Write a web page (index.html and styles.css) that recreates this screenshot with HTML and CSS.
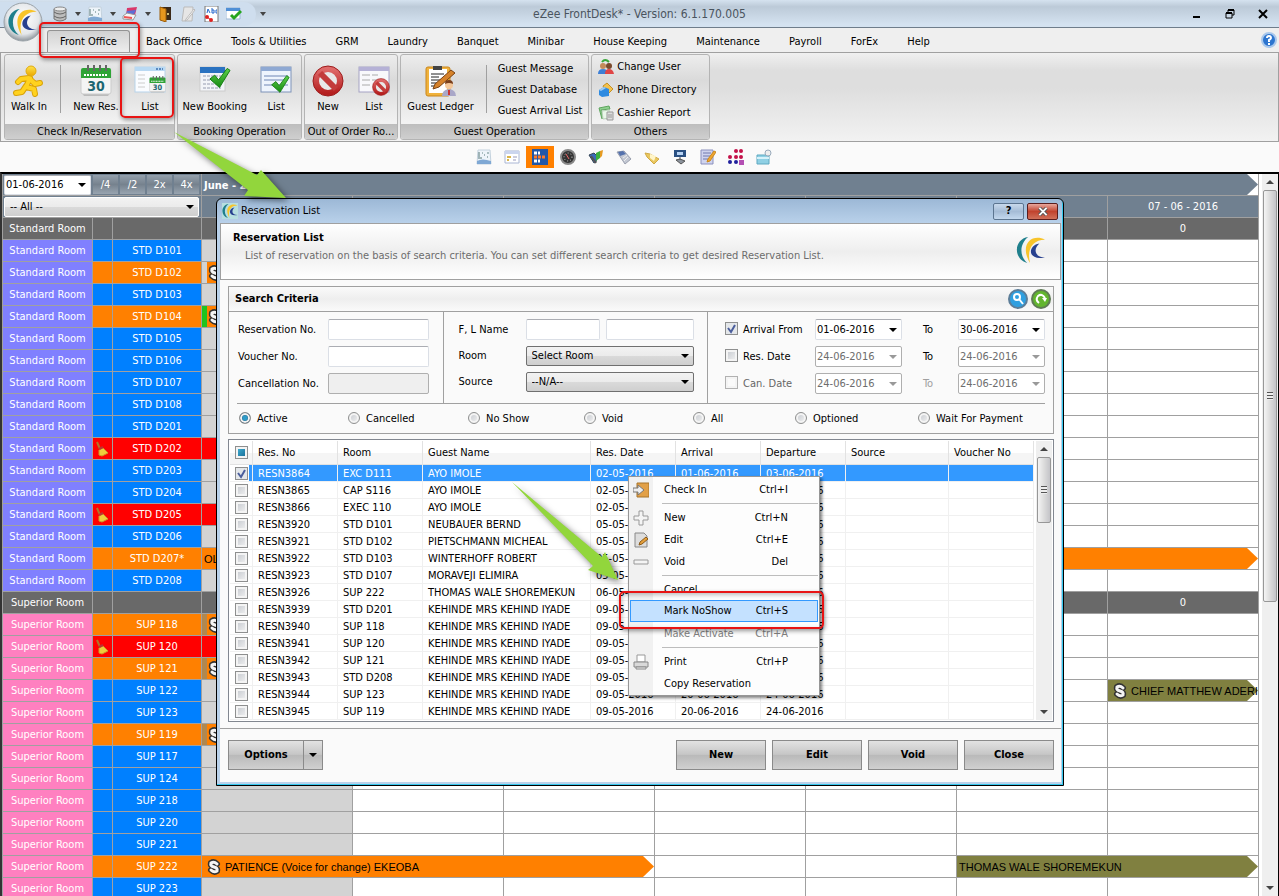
FILE: index.html
```html
<!DOCTYPE html>
<html lang="en">

<head>
    <meta charset="UTF-8" />
    <meta name="viewport" content="width=device-width, initial-scale=1.0" />
    <title>eZee FrontDesk</title>
    <link rel="stylesheet" href="styles.css">
</head>

<body>
    <svg class="sprite" aria-hidden="true">
        <defs>
            <linearGradient id="gold" x1="0" y1="0" x2="0" y2="1"><stop offset="0" stop-color="#ffe34d" /><stop offset="1" stop-color="#eba800" /></linearGradient>
            <linearGradient id="redball" x1="0" y1="0" x2="0" y2="1"><stop offset="0" stop-color="#df6a6a" /><stop offset="1" stop-color="#b51f1f" /></linearGradient>
            <linearGradient id="green" x1="0" y1="0" x2="0" y2="1"><stop offset="0" stop-color="#5fd14c" /><stop offset="1" stop-color="#158a12" /></linearGradient>
            <radialGradient id="orb" cx="50%" cy="40%" r="60%"><stop offset="0" stop-color="#fff" /><stop offset=".7" stop-color="#e4e7ea" /><stop offset="1" stop-color="#8f969c" /></radialGradient>
        </defs>
        <symbol id="swoosh" viewBox="0 0 32 30">
            <path d="M13 1C-2 3-4 24 12 29 3 21 4 8 13 1z" fill="#1f7f8c" />
            <path d="M31 4C17-3 3 9 15 29 11 14 18 4 31 4z" fill="#f8c42a" />
            <path d="M25 8C12 10 12 27 31 23 20 23 18 14 25 8z" fill="#27408f" />
        </symbol>
        <symbol id="walk" viewBox="0 0 32 32">
            <g fill="none" stroke="#d9a208" stroke-linecap="round" stroke-linejoin="round" stroke-width="6"><path d="M17 13l-4 9 8 2 1 5M13 21l-4 6-6 1M16 13l-8 1-3 3M17 14l5 5 5-1" /></g>
            <g fill="none" stroke="#ffd21f" stroke-linecap="round" stroke-linejoin="round" stroke-width="4"><path d="M17 13l-4 9 8 2 1 5M13 21l-4 6-6 1M16 13l-8 1-3 3M17 14l5 5 5-1" /></g>
            <circle cx="18" cy="6" r="5" fill="url(#gold)" stroke="#e0aa10" />
        </symbol>
        <symbol id="calendar" viewBox="0 0 32 32">
            <path d="M2 28h28l-2 3H4z" fill="#bbb" />
            <rect x="1" y="4" width="30" height="25" rx="2" fill="#f4f4f4" stroke="#ccc" />
            <path d="M1 13V5q0-2 2-2h26q2 0 2 2v8z" fill="#2fa336" />
            <path d="M8 0v6M14 0v6M20 0v6M26 0v6" stroke="#666" stroke-width="2" />
            <path d="M4 10h24" stroke="#fff" stroke-width="2" stroke-dasharray="2 1" />
            <text x="16" y="26" text-anchor="middle" class="cal-text">30</text>
        </symbol>
        <symbol id="listwin" viewBox="0 0 32 32">
            <rect x="1" y="2" width="30" height="25" fill="#fafcff" stroke="#b7d3ea" />
            <path d="M1 2h30v4H1z" fill="#b9d9f3" />
            <path d="M22 4h7" stroke="#5a89c0" stroke-width="2" stroke-dasharray="2 1" />
            <path d="M4 10h7M4 14h7M4 18h7M4 22h7" stroke="#ccc" />
        </symbol>
        <symbol id="check" viewBox="0 0 24 24">
            <path d="M2 13l5-4 4 5L20 2l3 2-11 18z" fill="url(#green)" stroke="#127a10" />
        </symbol>
        <symbol id="noentry" viewBox="0 0 32 32">
            <circle cx="16" cy="16" r="12" fill="#e8e8e8" stroke="url(#redball)" stroke-width="6" />
            <path d="M8 8l16 16" stroke="#c33b3b" stroke-width="6" />
            <circle cx="16" cy="16" r="15" fill="none" stroke="#9c1c1c" />
        </symbol>
        <symbol id="ledger" viewBox="0 0 32 32">
            <rect x="1" y="2" width="24" height="29" rx="2" fill="#f0b23c" stroke="#c9861c" />
            <rect x="4" y="4" width="18" height="24" fill="#fff" />
            <path d="M8 1h9v4H8z" fill="#444" />
            <path d="M6 9h13M6 12h8M6 15h10M6 18h6M6 21h7" stroke="#222" />
            <path d="M8 24l2-5L26 5l4 3-16 14z" fill="#d6822a" stroke="#7a4313" />
            <circle cx="24" cy="20" r="4" fill="#f4c79a" /><path d="M20 19q0-4 4-4t4 4q-4-2-8 0z" fill="#7a3f1c" />
            <path d="M17 31q0-6 7-7 7 1 7 7z" fill="#a9a7c8" /><path d="M23 25h2v5h-2z" fill="#c33" />
        </symbol>
        <symbol id="users" viewBox="0 0 16 16">
            <path d="M4 3q3-4 7 0" fill="none" stroke="#3aa63a" stroke-width="2" />
            <circle cx="5" cy="7" r="3" fill="#c48a5a" /><circle cx="11" cy="7" r="3" fill="#7a4a2c" />
            <path d="M0 15q0-5 5-5t5 5z" fill="#3d7fd6" /><path d="M7 15q0-5 4-5t5 5z" fill="#e04545" />
        </symbol>
        <symbol id="phone" viewBox="0 0 16 16">
            <path d="M5 4l4-3 6 6-6 6z" fill="#f2c14e" stroke="#c48f22" />
            <path d="M1 8l5-3 5 2v7l-7 1-3-2z" fill="#2f8be0" /><path d="M1 8l5-3 2 1-5 3z" fill="#9ccbf5" />
        </symbol>
        <symbol id="report" viewBox="0 0 16 16">
            <path d="M1 3l10-2 1 3-9 1 2 8-1 1z" fill="#8fd08f" stroke="#5ea65e" /><path d="M4 6l7-1 1 8-7 1z" fill="#eaf7ea" stroke="#b9d3b9" />
            <path d="M9 7h6v8H9z" fill="#ddd" stroke="#999" /><path d="M10 10h4M10 12h4" stroke="#999" />
        </symbol>
        <symbol id="database" viewBox="0 0 16 16">
            <path d="M2 3v10q6 4 12 0V3z" fill="#bdbdbd" stroke="#777" /><ellipse cx="8" cy="3" rx="6" ry="2" fill="#eee" stroke="#888" />
            <path d="M2 6q6 4 12 0M2 10q6 4 12 0" fill="none" stroke="#666" />
        </symbol>
        <symbol id="chart" viewBox="0 0 16 16">
            <path d="M2 1h12l1 14H1z" fill="#eef4fa" stroke="#c4d2de" /><path d="M1 12q5-3 14 0v3H1z" fill="#7fa8d4" />
            <path d="M3 3v7M4 9h2M8 6h1M11 8h1" fill="none" stroke="#577" /><path d="M6 4h1M11 4h2" stroke="#688" stroke-width="1" />
        </symbol>
        <symbol id="cards" viewBox="0 0 16 16">
            <path d="M5 2l10-1-2 8-9 1z" fill="#d9386b" /><path d="M5 5l9-1-2 4-8 1z" fill="#5b6fd6" />
            <path d="M1 10l4-3 9 2-3 5-10-1z" fill="#f5f5f5" stroke="#999" /><path d="M2 11l8 1" stroke="#e55" stroke-width="2" />
        </symbol>
        <symbol id="door" viewBox="0 0 16 16">
            <path d="M3 1h11v13H3z" fill="#3b2a1a" /><path d="M3 1l6 2v13l-6-2z" fill="#e7971e" stroke="#9c5e0b" /><circle cx="11" cy="8" r="1" fill="#fff2a0" />
        </symbol>
        <symbol id="note" viewBox="0 0 16 16">
            <path d="M4 1h9l-1 14H2z" fill="#e6e6e6" stroke="#bbb" /><path d="M14 3L6 13l-1 2 2-1 8-10z" fill="#fafafa" stroke="#bbb" />
        </symbol>
        <symbol id="abc" viewBox="0 0 16 16">
            <path d="M2 0h13v16H2z" fill="#fff" stroke="#777" /><path d="M4 7l1-4 2 4M9 2v5h2V4H9M14 4h-1v3h1" fill="none" stroke="#26c" />
            <circle cx="4" cy="11" r="2" fill="#d22" /><circle cx="8" cy="14" r="2" fill="#d22" /><path d="M4 11l4 3" stroke="#d22" />
        </symbol>
        <symbol id="booklist" viewBox="0 0 16 16">
            <path d="M0 2h14v11H0z" fill="#fff" stroke="#9bb7d6" /><path d="M0 2h14v3H0z" fill="#4f8fd6" /><path d="M5 9l3 3 7-7" fill="none" stroke="#26a51f" stroke-width="3" />
        </symbol>
        <symbol id="formwin" viewBox="0 0 16 16">
            <path d="M1 2h14v12H1z" fill="#fff" stroke="#aab6d4" /><path d="M1 2h14v3H1z" fill="#cbd5ee" /><path d="M3 8h4M3 11h2" stroke="#d9b44a" stroke-width="2" /><path d="M9 8h4M9 11h3" stroke="#99b" />
        </symbol>
        <symbol id="planner" viewBox="0 0 16 16">
            <path d="M0 0h16v16H0z" fill="#2157a8" /><path d="M2 4h6M2 12h6" stroke="#fff" stroke-width="3" stroke-dasharray="3 1" /><path d="M2 8h11" stroke="#ff7b29" stroke-width="3" stroke-dasharray="3 1" />
        </symbol>
        <symbol id="gauge" viewBox="0 0 16 16">
            <circle cx="8" cy="8" r="7" fill="#333" stroke="#888" stroke-width="2" /><circle cx="8" cy="8" r="4" fill="none" stroke="#ccc" stroke-dasharray="1 2" /><path d="M6 5l3 5" stroke="#e66" />
        </symbol>
        <symbol id="flag" viewBox="0 0 16 16">
            <path d="M1 6l5-2 3 3-1 6-2 1z" fill="#3a6ab8" stroke="#345" /><path d="M8 4l4-2v7l-4 3z" fill="#3db03d" /><path d="M12 2l3-1-1 6-2 2z" fill="#e59b22" /><path d="M3 7l5 7" stroke="#555" stroke-width="2" />
        </symbol>
        <symbol id="pages" viewBox="0 0 16 16">
            <path d="M1 3l7-1 7 8-6 5z" fill="#c3c8d3" stroke="#9aa0ae" /><path d="M2 3l5-1 3 3-6 2z" fill="#5572ad" /><path d="M7 9l4-3M8 12l4-4" stroke="#eee" />
        </symbol>
        <symbol id="folder" viewBox="0 0 16 16">
            <path d="M1 4l5 1 9 5-5 5-7-7z" fill="#e9c75f" stroke="#d0a945" /><path d="M6 5l6 2-2 5-4-3z" fill="#fff5c9" />
        </symbol>
        <symbol id="kiosk" viewBox="0 0 16 16">
            <path d="M2 1h12v7H2z" fill="#2a5082" /><path d="M5 3h6v3H5z" fill="#b8d4f5" /><path d="M8 8v3M4 11l4-1 5 2-4 3z" fill="#8b929c" stroke="#555" />
        </symbol>
        <symbol id="editdoc" viewBox="0 0 16 16">
            <path d="M1 1h12v14H1z" fill="#cfd3ee" stroke="#8b90bd" /><path d="M3 4h8M3 7h7M3 10h5" stroke="#7078ad" /><path d="M7 13l1-3 6-8 2 1-6 9z" fill="#f0a531" stroke="#c9891c" />
        </symbol>
        <symbol id="dots" viewBox="0 0 16 16">
            <g fill="#c3124a"><circle cx="8" cy="2" r="2" /><circle cx="13" cy="2" r="2" /><circle cx="2" cy="8" r="2" /><circle cx="8" cy="8" r="2" /><circle cx="13" cy="8" r="2" /></g>
            <g fill="#20209c"><circle cx="2" cy="13" r="2" /><circle cx="8" cy="13" r="2" /></g><path d="M11 11h5v5h-5z" fill="#b34fb3" />
        </symbol>
        <symbol id="lockfolder" viewBox="0 0 16 16">
            <path d="M1 6h12v9H1z" fill="#8fd0e4" stroke="#5fa9c1" /><path d="M1 9h12" stroke="#d7f2fa" stroke-width="2" /><circle cx="12" cy="4" r="3" fill="#eee" stroke="#9ab" />
        </symbol>
        <symbol id="broom" viewBox="0 0 14 16">
            <path d="M2 1l3 7" stroke="#b0752a" stroke-width="2" /><path d="M4 9l4-2 5 5-6 3-3-1z" fill="#f0cc3c" stroke="#c99a2a" /><path d="M4 8l4-2" stroke="#b33" stroke-width="2" />
        </symbol>
        <symbol id="dollar" viewBox="0 0 14 16">
            <g fill="none" stroke-linecap="round">
                <path d="M10 5Q7 2 4 4 3 7 7 8 11 9 10 12 7 14 4 11" stroke="#333" stroke-width="6" />
                <path d="M10 5Q7 2 4 4 3 7 7 8 11 9 10 12 7 14 4 11" stroke="#f4f4f4" stroke-width="3" />
            </g>
        </symbol>
    </svg>

    <div class="app">
        <header class="titlebar">
            <div class="quick-area">
                <div class="quick">
                    <button aria-label="Data"><svg><use href="#database" /></svg></button><i class="caret"></i>
                    <button aria-label="Charts"><svg><use href="#chart" /></svg></button><i class="caret"></i>
                    <button aria-label="Cards"><svg><use href="#cards" /></svg></button><i class="caret"></i>
                    <button aria-label="Exit"><svg><use href="#door" /></svg></button>
                    <button aria-label="Notes"><svg><use href="#note" /></svg></button>
                    <button aria-label="Names"><svg><use href="#abc" /></svg></button>
                    <button aria-label="Bookings"><svg><use href="#booklist" /></svg></button>
                </div>
                <i class="caret more"></i>
            </div>
            <h1>eZee FrontDesk* - Version: 6.1.170.005</h1>
            <div class="window-buttons">
                <button aria-label="Minimize"><svg viewBox="0 0 10 10"><path d="M1 8h7" stroke="#000" stroke-width="2" /></svg></button>
                <button aria-label="Restore"><svg viewBox="0 0 10 10"><path d="M3 3V1h6v5H7M1 4h6v5H1z" fill="none" stroke="#000" /><path d="M3 1h6M1 4h6" stroke="#000" stroke-width="2" /></svg></button>
                <button aria-label="Close"><svg viewBox="0 0 10 10"><path d="M1 1l8 8M9 1L1 9" stroke="#000" stroke-width="2" /></svg></button>
            </div>
            <svg class="orb" viewBox="0 0 40 40"><circle cx="20" cy="20" r="19" fill="url(#orb)" stroke="#9aa2a8" /><use href="#swoosh" x="4" y="6" width="31" height="28" /></svg>
        </header>

        <nav class="tabs">
            <button class="active">Front Office</button>
            <button>Back Office</button>
            <button>Tools &amp; Utilities</button>
            <button>GRM</button>
            <button>Laundry</button>
            <button>Banquet</button>
            <button>Minibar</button>
            <button>House Keeping</button>
            <button>Maintenance</button>
            <button>Payroll</button>
            <button>ForEx</button>
            <button>Help</button>
            <svg class="help" viewBox="0 0 16 16"><circle cx="8" cy="8" r="7" fill="#2d75cf" stroke="#a9c8ec" stroke-width="2" /><path d="M6 6q0-2 2-2t2 2q0 1-2 2v2M8 11v2" fill="none" stroke="#fff" stroke-width="2" /></svg>
        </nav>

        <div class="ribbon">
            <section class="group checkin">
                <div class="group-body">
                    <button class="big"><svg><use href="#walk" /></svg>Walk In</button>
                    <i class="divider"></i>
                    <button class="big wide"><svg><use href="#calendar" /></svg>New Res.</button>
                    <button class="big"><svg><use href="#listwin" /><use href="#calendar" x="15" y="11" width="17" height="17" /></svg>List</button>
                </div>
                <h2>Check In/Reservation</h2>
            </section>
            <section class="group booking">
                <div class="group-body">
                    <button class="big wide"><svg viewBox="0 0 32 32"><rect x="1" y="2" width="25" height="24" fill="#f2f4f8" stroke="#ccc" /><path d="M1 2h25v6H1z" fill="#2a72c0" /><path d="M4 11h18M4 15h18M4 19h18M4 23h18" stroke="#c4c8d4" stroke-dasharray="3 1" stroke-width="2" /><use href="#check" x="9" y="1" width="23" height="24" /></svg>New Booking</button>
                    <button class="big"><svg viewBox="0 0 32 32"><rect x="1" y="2" width="30" height="25" fill="#eef4fd" stroke="#7f93b8" /><path d="M1 2h30v4H1z" fill="#8fa9d3" /><path d="M4 11h24M4 15h24M4 20h24" stroke="#6f86b5" /><use href="#check" x="9" y="9" width="22" height="20" /></svg>List</button>
                </div>
                <h2>Booking Operation</h2>
            </section>
            <section class="group order">
                <div class="group-body">
                    <button class="big"><svg><use href="#noentry" /></svg>New</button>
                    <button class="big"><svg viewBox="0 0 32 32"><rect x="1" y="2" width="30" height="25" fill="#f8f8fb" stroke="#a6a3c4" /><path d="M1 2h30v4H1z" fill="#b5b1d6" /><path d="M4 10h8M4 15h8M4 20h8M14 10h6M14 15h5" stroke="#aaa" /><use href="#noentry" x="14" y="13" width="18" height="18" /></svg>List</button>
                </div>
                <h2>Out of Order Ro...</h2>
            </section>
            <section class="group guest">
                <div class="group-body">
                    <button class="big wide"><svg><use href="#ledger" /></svg>Guest Ledger</button>
                    <i class="divider"></i>
                    <div class="links">
                        <button>Guest Message</button>
                        <button>Guest Database</button>
                        <button>Guest Arrival List</button>
                    </div>
                </div>
                <h2>Guest Operation</h2>
            </section>
            <section class="group others">
                <div class="group-body">
                    <div class="links icons">
                        <button><svg><use href="#users" /></svg>Change User</button>
                        <button><svg><use href="#phone" /></svg>Phone Directory</button>
                        <button><svg><use href="#report" /></svg>Cashier Report</button>
                    </div>
                </div>
                <h2>Others</h2>
            </section>
        </div>

        <div class="toolbar">
            <button aria-label="Chart"><svg><use href="#chart" /></svg></button>
            <button aria-label="Form"><svg><use href="#formwin" /></svg></button>
            <button aria-label="Stay view" class="active"><svg><use href="#planner" /></svg></button>
            <button aria-label="Dashboard"><svg><use href="#gauge" /></svg></button>
            <button aria-label="Rates"><svg><use href="#flag" /></svg></button>
            <button aria-label="Pages"><svg><use href="#pages" /></svg></button>
            <button aria-label="Folder"><svg><use href="#folder" /></svg></button>
            <button aria-label="Kiosk"><svg><use href="#kiosk" /></svg></button>
            <button aria-label="Edit"><svg><use href="#editdoc" /></svg></button>
            <button aria-label="Status"><svg><use href="#dots" /></svg></button>
            <button aria-label="Lock"><svg><use href="#lockfolder" /></svg></button>
        </div>

        <main class="planner">
            <div class="planner-scroll">
                <table class="rooms">
                    <colgroup>
                        <col class="c-type"><col class="c-icon"><col class="c-room">
                        <col><col><col><col><col><col><col>
                    </colgroup>
                    <thead>
                        <tr>
                            <th colspan="3" class="tools">
                                <div>
                                    <select class="date" aria-label="Start date"><option>01-06-2016</option></select>
                                    <button>/4</button><button>/2</button><button>2x</button><button>4x</button>
                                </div>
                            </th>
                            <th colspan="7" class="month"><div>June - 2016</div></th>
                        </tr>
                        <tr>
                            <th colspan="3" class="tools"><div><select class="combo" aria-label="Room type"><option>-- All --</option></select></div></th>
                            <th></th><th></th><th></th><th></th><th></th><th></th>
                            <th>07 - 06 - 2016</th>
                        </tr>
                    </thead>
                    <tbody></tbody>
                </table>
            </div>
            <div class="scrollbar"><i class="up"></i><div class="thumb"></div><i class="down"></i></div>
        </main>

        <div class="dialog" role="dialog" aria-label="Reservation List">
            <div class="dialog-title">
                <svg class="dialog-icon"><use href="#swoosh" /></svg>
                <span>Reservation List</span>
                <button class="q" aria-label="Help">?</button>
                <button class="x" aria-label="Close window"><svg viewBox="0 0 12 10"><path d="M2 1l8 8M10 1L2 9" stroke="#555" stroke-width="4" /><path d="M2 1l8 8M10 1L2 9" stroke="#fff" stroke-width="2" /></svg></button>
            </div>
            <div class="dialog-body">
                <div class="intro">
                    <div>
                        <h2>Reservation List</h2>
                        <p>List of reservation on the basis of search criteria. You can set different search criteria to get desired Reservation List.</p>
                    </div>
                    <svg class="brand"><use href="#swoosh" /></svg>
                </div>

                <form class="search">
                    <div class="search-title">
                        <h3>Search Criteria</h3>
                        <button type="button" aria-label="Search"><svg viewBox="0 0 20 20"><circle cx="10" cy="10" r="9" fill="#2f9fe0" stroke="#5c7d98" stroke-width="2" /><circle cx="9" cy="8" r="3" fill="none" stroke="#fff" stroke-width="2" /><path d="M11 10l4 5" stroke="#fff" stroke-width="2" /></svg></button>
                        <button type="button" aria-label="Refresh"><svg viewBox="0 0 20 20"><circle cx="10" cy="10" r="9" fill="#62b52e" stroke="#5f7a55" stroke-width="2" /><path d="M8 14q-4-3-1-7 4-3 7 2" fill="none" stroke="#fff" stroke-width="2" /><path d="M11 9h5l-2 4z" fill="#fff" /></svg></button>
                    </div>
                    <div class="fields">
                        <div class="col numbers">
                            <label for="resno">Reservation No.</label><input type="text" id="resno">
                            <label for="vouno">Voucher No.</label><input type="text" id="vouno">
                            <label for="canno">Cancellation No.</label><input type="text" id="canno" disabled>
                        </div>
                        <div class="col names">
                            <label for="fname">F, L Name</label>
                            <div class="pair"><input type="text" id="fname"><input type="text" aria-label="Last name"></div>
                            <label for="room">Room</label><select class="combo" id="room"><option>Select Room</option></select>
                            <label for="source">Source</label><select class="combo" id="source"><option>--N/A--</option></select>
                        </div>
                        <div class="col dates">
                            <label><input type="checkbox" checked>Arrival From</label>
                            <select class="date" aria-label="Arrival from"><option>01-06-2016</option></select><span>To</span>
                            <select class="date" aria-label="Arrival to"><option>30-06-2016</option></select>
                            <label><input type="checkbox">Res. Date</label>
                            <select class="date" aria-label="Res. from" disabled><option>24-06-2016</option></select><span>To</span>
                            <select class="date" aria-label="Res. to" disabled><option>24-06-2016</option></select>
                            <label class="off"><input type="checkbox" disabled>Can. Date</label>
                            <select class="date" aria-label="Can. from" disabled><option>24-06-2016</option></select><span class="dim">To</span>
                            <select class="date" aria-label="Can. to" disabled><option>24-06-2016</option></select>
                        </div>
                    </div>
                    <div class="status">
                        <label><input type="radio" name="status" checked>Active</label>
                        <label><input type="radio" name="status">Cancelled</label>
                        <label><input type="radio" name="status">No Show</label>
                        <label><input type="radio" name="status">Void</label>
                        <label><input type="radio" name="status">All</label>
                        <label><input type="radio" name="status">Optioned</label>
                        <label><input type="radio" name="status">Wait For Payment</label>
                    </div>
                </form>

                <div class="results">
                    <table class="res-table">
                        <colgroup>
                            <col class="r-check"><col class="r-std"><col class="r-std"><col class="r-name"><col class="r-std">
                            <col class="r-std"><col class="r-std"><col class="r-source"><col>
                        </colgroup>
                        <thead>
                            <tr>
                                <th><input type="checkbox" class="some" aria-label="Select all"></th>
                                <th>Res. No</th><th>Room</th><th>Guest Name</th><th>Res. Date</th>
                                <th>Arrival</th><th>Departure</th><th>Source</th><th>Voucher No</th>
                            </tr>
                        </thead>
                        <tbody></tbody>
                    </table>
                    <div class="scrollbar"><i class="up"></i><div class="thumb"></div><i class="down"></i></div>
                </div>

                <div class="actions">
                    <div class="split"><button>Options</button><button aria-label="More options"><i class="caret"></i></button></div>
                    <button>New</button>
                    <button>Edit</button>
                    <button>Void</button>
                    <button>Close</button>
                </div>
            </div>
        </div>

        <ul class="menu">
            <li><svg viewBox="0 0 16 16"><path d="M4 1h12v14H4z" fill="#e2a047" stroke="#a8742a" /><path d="M0 6h5V3l6 5-6 5v-3H0z" fill="#eee" stroke="#777" /></svg><span>Check In</span><kbd>Ctrl+I</kbd></li>
            <li class="sep"></li>
            <li><svg viewBox="0 0 16 16"><path d="M6 1h4v5h5v4h-5v5H6v-5H1V6h5z" fill="#f4f4f4" stroke="#999" /></svg><span>New</span><kbd>Ctrl+N</kbd></li>
            <li><svg viewBox="0 0 16 16"><path d="M2 1h9l3 3v11H2z" fill="#ddd" stroke="#888" /><path d="M6 13l1-3 6-5 2 2-6 5z" fill="#e5a03c" stroke="#8a5a1a" /></svg><span>Edit</span><kbd>Ctrl+E</kbd></li>
            <li><svg viewBox="0 0 16 16"><path d="M1 6h14v4H1z" fill="#f4f4f4" stroke="#999" /></svg><span>Void</span><kbd>Del</kbd></li>
            <li class="sep"></li>
            <li><i></i><span>Cancel</span></li>
            <li class="hover"><i></i><span>Mark NoShow</span><kbd>Ctrl+S</kbd></li>
            <li class="off"><i></i><span>Make Activate</span><kbd>Ctrl+A</kbd></li>
            <li class="sep"></li>
            <li><svg viewBox="0 0 16 16"><path d="M4 1h8v7H4z" fill="#fff" stroke="#999" /><path d="M1 8h14v5H1z" fill="#d9d9d9" stroke="#888" /><path d="M3 13h10v2H3z" fill="#eee" stroke="#888" /></svg><span>Print</span><kbd>Ctrl+P</kbd></li>
            <li><i></i><span>Copy Reservation</span></li>
        </ul>

        <div class="mark mark-tab"></div>
        <div class="mark mark-list"></div>
        <div class="mark mark-menu"></div>
        <svg class="pointer to-dialog" viewBox="0 0 112 68"><path d="M0 1L83 44 87 39 112 67 70 65 74 59z" /></svg>
        <svg class="pointer to-menu" viewBox="0 0 106 98"><path d="M0 0L90 75 93 70 106 98 76 88 81 84z" /></svg>
    </div>

    <script>
        // [type, room, state, dirty, bars]
        const S = 'Standard Room';
        const P = 'Superior Room';
        const rooms = [
            [S], [S, 'STD D101', 'free'], [S, 'STD D102', 'busy', '', 'late'], [S, 'STD D103', 'free'],
            [S, 'STD D104', 'busy', '', 'green'], [S, 'STD D105', 'free'], [S, 'STD D106', 'free'],
            [S, 'STD D107', 'free'], [S, 'STD D108', 'free'], [S, 'STD D201', 'free'],
            [S, 'STD D202', 'blocked', 'dirty', 'block'], [S, 'STD D203', 'free'], [S, 'STD D204', 'free'],
            [S, 'STD D205', 'blocked', 'dirty', 'block'], [S, 'STD D206', 'free'],
            [S, 'STD D207*', 'busy', '', [[7, 'orange', 'OL']]], [S, 'STD D208', 'free'],
            [P], [P, 'SUP 118', 'busy', '', 'tan'], [P, 'SUP 120', 'blocked', 'dirty', 'block'],
            [P, 'SUP 121', 'busy', '', 'tan'],
            [P, 'SUP 122', 'free', '', [[1], [1], [1], [1], [1], [1], [1, 'olive', 'CHIEF MATTHEW ADERI', true]]],
            [P, 'SUP 123', 'free'], [P, 'SUP 119', 'busy', '', 'tan'], [P, 'SUP 117', 'free'],
            [P, 'SUP 124', 'free'], [P, 'SUP 218', 'free'], [P, 'SUP 220', 'free'], [P, 'SUP 221', 'free'],
            [P, 'SUP 222', 'busy', '', [[3, 'orange', 'PATIENCE (Voice for change) EKEOBA', true], [1], [1], [2, 'olive', 'THOMAS WALE SHOREMEKUN']]],
            [P, 'SUP 223', 'free']
        ];
        const dollar = '<svg><use href="#dollar" /></svg>';
        const empty = '<td class="day"></td>';

        function dayCells(bars) {
            if (!bars) return empty.repeat(7);
            if (bars === 'block') return '<td class="day blocked"></td>' + empty.repeat(6);
            if (typeof bars === 'string') {
                return `<td class="day"><div class="bar orange ${bars}">${dollar}</div></td>` + empty.repeat(6);
            }
            return bars.map(([span, color, name, icon]) => color
                ? `<td class="day" colspan="${span}"><div class="bar ${color}">${icon ? dollar : ''}<span>${name}</span></div></td>`
                : empty).join('');
        }

        document.querySelector('.rooms tbody').innerHTML = rooms.map(([type, room, state, dirty, bars]) => {
            if (!room) {
                return `<tr class="total"><td>${type}</td><td></td><td></td>${'<td></td>'.repeat(6)}<td>0</td></tr>`;
            }
            const typeClass = type === S ? 'standard' : 'superior';
            return `<tr><td class="${typeClass}">${type}</td>
                <td class="icon ${state}">${dirty ? '<svg><use href="#broom" /></svg>' : ''}</td>
                <td class="${state}">${room}</td>${dayCells(bars)}</tr>`;
        }).join('');

        const K = 'KEHINDE MRS KEHIND IYADE';
        const reservations = [
            ['RESN3864', 'EXC D111', 'AYO IMOLE', '02-05-2016', '01-06-2016', '03-06-2016'],
            ['RESN3865', 'CAP S116', 'AYO IMOLE', '02-05-2016', '01-06-2016', '03-06-2016'],
            ['RESN3866', 'EXEC 110', 'AYO IMOLE', '02-05-2016', '01-06-2016', '03-06-2016'],
            ['RESN3920', 'STD D101', 'NEUBAUER BERND', '05-05-2016', '12-06-2016', '17-06-2016'],
            ['RESN3921', 'STD D102', 'PIETSCHMANN MICHEAL', '05-05-2016', '12-06-2016', '17-06-2016'],
            ['RESN3922', 'STD D103', 'WINTERHOFF ROBERT', '05-05-2016', '12-06-2016', '17-06-2016'],
            ['RESN3923', 'STD D107', 'MORAVEJI ELIMIRA', '05-05-2016', '12-06-2016', '17-06-2016'],
            ['RESN3926', 'SUP 222', 'THOMAS WALE SHOREMEKUN', '06-05-2016', '06-06-2016', '10-06-2016'],
            ['RESN3939', 'STD D201', K, '09-05-2016', '20-06-2016', '24-06-2016'],
            ['RESN3940', 'SUP 118', K, '09-05-2016', '20-06-2016', '24-06-2016'],
            ['RESN3941', 'SUP 120', K, '09-05-2016', '20-06-2016', '24-06-2016'],
            ['RESN3942', 'SUP 121', K, '09-05-2016', '20-06-2016', '24-06-2016'],
            ['RESN3943', 'STD D208', K, '09-05-2016', '20-06-2016', '24-06-2016'],
            ['RESN3944', 'SUP 123', K, '09-05-2016', '20-06-2016', '24-06-2016'],
            ['RESN3945', 'SUP 119', K, '09-05-2016', '20-06-2016', '24-06-2016']
        ];
        document.querySelector('.res-table tbody').innerHTML = reservations.map((row, i) =>
            `<tr class="${i === 0 ? 'selected' : ''}">
                <td><input type="checkbox" aria-label="${row[0]}" ${i === 0 ? 'checked' : ''}></td>
                ${row.map(cell => `<td>${cell}</td>`).join('')}<td></td><td></td></tr>`).join('');
    </script>
</body>

</html>
```
FILE: styles.css
```css
* {
    margin: 0;
    padding: 0;
    box-sizing: border-box;
}

body {
    font: 11px/14px "DejaVu Sans Condensed", "Noto Sans", sans-serif;
    color: #000;
    background: #fafafa;
}

button,
input,
select {
    font: inherit;
    color: inherit;
    border: 0;
    background: none;
}

h1,
h2 {
    font-size: inherit;
    font-weight: normal;
}

.sprite {
    position: absolute;
    width: 0;
    height: 0;
}

.app {
    position: relative;
    display: flex;
    flex-direction: column;
    height: 100vh;
    overflow: hidden;
}

.caret {
    width: 0;
    height: 0;
    border: 3px solid transparent;
    border-top: 4px solid #444;
    border-bottom: 0;
}

/* title bar */
.titlebar {
    position: relative;
    display: grid;
    grid-template-columns: 1fr auto 1fr;
    align-items: center;
    height: 28px;
    background: linear-gradient(#d5e2ef, #bccad8 25%, #d4e2f0 90%);
    border-bottom: 1px solid #6f7d8b;
}

.titlebar h1 {
    font-size: 12px;
    color: #4a545e;
}

.quick-area {
    display: flex;
    align-items: center;
}

.quick {
    display: flex;
    align-items: center;
    gap: 7px;
    width: 256px;
    height: 24px;
    padding-left: 52px;
    border-radius: 0 12px 12px 0;
    background: #cfdeee;
}

.quick button,
.quick svg {
    display: block;
    width: 16px;
    height: 16px;
}

.quick .caret {
    margin: 0 -1px 0 0;
}

.more {
    margin-left: 4px;
}

.window-buttons {
    display: flex;
    justify-content: flex-end;
    gap: 23px;
    padding-right: 11px;
}

.window-buttons svg {
    display: block;
    width: 10px;
    height: 10px;
}

.orb {
    position: absolute;
    left: 3px;
    top: 2px;
    width: 40px;
    height: 40px;
}

/* tabs */
.tabs {
    display: flex;
    align-items: flex-end;
    gap: 3px;
    height: 24px;
    padding-left: 47px;
    background: #efefef;
}

.tabs button {
    height: 22px;
    padding: 2px 13px 0;
    white-space: nowrap;
}

.tabs .active {
    background: linear-gradient(#d2d2d2, #ededed);
    border: 1px solid #949494;
    border-bottom: 0;
    border-radius: 3px 3px 0 0;
    padding: 1px 12px 0;
}

.help {
    width: 16px;
    height: 16px;
    margin: 0 2px 4px auto;
}

/* ribbon */
.ribbon {
    display: flex;
    gap: 2px;
    height: 90px;
    padding: 1px 3px;
    border: 1px solid #a0a0a0;
    background: linear-gradient(#f0f0f0, #dedede 20%, #dedede 40%, #f2f2f2);
}

.group {
    display: flex;
    flex-direction: column;
    border: 1px solid #b4b4b4;
    border-radius: 3px;
    background: linear-gradient(#ededed, #dadada 30%, #f2f2f2 80%);
    overflow: hidden;
}

.group h2 {
    height: 15px;
    line-height: 16px;
    text-align: center;
    white-space: nowrap;
    background: linear-gradient(#bdbdbd, #cfcfcf);
}

.group-body {
    display: flex;
    justify-content: space-around;
    flex: 1;
}

.checkin {
    width: 171px;
}

.checkin .group-body {
    justify-content: flex-start;
    padding-left: 2px;
}

.booking {
    width: 125px;
}

.order {
    width: 94px;
}

.guest {
    width: 189px;
}

.others {
    width: 119px;
}

.big {
    display: flex;
    flex-direction: column;
    align-items: center;
    gap: 3px;
    width: 44px;
    padding-top: 10px;
    white-space: nowrap;
}

.big.wide {
    width: 68px;
}

.checkin .wide {
    width: 64px;
}

.big svg {
    width: 32px;
    height: 32px;
    flex: none;
}

.cal-text {
    font: bold 14px "DejaVu Sans Condensed", sans-serif;
    fill: #1d6672;
}

.divider {
    width: 1px;
    height: 48px;
    margin-top: 10px;
    background: #a0a0a0;
}

.checkin .divider {
    margin: 10px 3px 0 9px;
}

.links {
    display: flex;
    flex-direction: column;
    justify-content: center;
    gap: 7px;
    white-space: nowrap;
}

.links button {
    display: flex;
    align-items: center;
    height: 14px;
}

.links.icons {
    gap: 9px;
    margin-left: -6px;
}

.links svg {
    width: 16px;
    height: 16px;
    margin-right: 3px;
}

/* icon strip */
.toolbar {
    display: flex;
    justify-content: center;
    align-items: center;
    height: 30px;
    padding: 0 31px 0 0;
    background: #fafafa;
}

.toolbar button {
    display: grid;
    place-items: center;
    width: 28px;
    height: 22px;
}

.toolbar .active {
    background: #ff8000;
}

.toolbar svg {
    width: 16px;
    height: 16px;
}

/* stay view */
.planner {
    flex: 1;
    display: flex;
    min-height: 0;
    border: 1px solid #000;
    border-top-width: 2px;
    border-left: 2px solid #333;
    border-bottom: 0;
    background: #fff;
}

.planner-scroll {
    flex: 1;
    overflow: hidden;
    border-left: 1px solid #a0a0a0;
}

.rooms {
    width: calc(100% - 3px);
    table-layout: fixed;
    border-collapse: separate;
    border-spacing: 0;
}

.c-type {
    width: 90px;
}

.c-icon {
    width: 20px;
}

.c-room {
    width: 89px;
}

.rooms td,
.rooms th {
    height: 22px;
    padding-top: 1px;
    border: solid #a0a0a0;
    border-width: 0 1px 1px 0;
    text-align: center;
    font-weight: normal;
    color: #fff;
    white-space: nowrap;
}

.rooms th {
    background: #708090;
}

.rooms .month,
.rooms .tools,
.rooms .icon,
.rooms td.day {
    padding-top: 0;
}

.rooms .month {
    background: #fff;
}

.month div {
    height: 21px;
    padding-left: 2px;
    line-height: 23px;
    text-align: left;
    font-weight: bold;
    background: #708090;
    clip-path: polygon(0 0, calc(100% - 11px) 0, 100% 50%, calc(100% - 11px) 100%, 0 100%);
}

.tools div {
    display: flex;
    align-items: center;
    gap: 2px;
    height: 21px;
    padding: 0 2px 0 1px;
}

.tools .date {
    width: 87px;
    height: 20px;
}

.tools button {
    flex: 1;
    height: 19px;
    background: linear-gradient(#94a0ac, #76828e 50%, #98a4b0);
}

.tools .combo {
    width: 100%;
    height: 20px;
    border-color: #fff;
}

.rooms .total td {
    background: #696969;
}

.rooms .standard {
    background: #8080ff;
}

.rooms .superior {
    background: #ff80c0;
}

.rooms .free {
    background: #0080ff;
}

.rooms .busy {
    background: #ff8000;
}

.rooms .blocked {
    background: #f00;
}

.icon svg {
    display: block;
    width: 14px;
    height: 16px;
    margin-left: 2px;
}

.rooms td.day {
    height: 22px;
    background: #fff;
}

.rooms td:nth-child(4).day {
    background: #d3d3d3;
}

.rooms td.day[colspan="7"],
.rooms td.day[colspan="3"] {
    background: #fff;
}

.rooms td.day.blocked {
    background: #f00;
}

.bar {
    position: relative;
    z-index: 0;
    display: flex;
    align-items: center;
    gap: 4px;
    height: 21px;
    padding-left: 2px;
    font-family: "Liberation Sans", Arial, sans-serif;
    color: #000;
}

/* arrow shape behind the guest name, which may run past it */
.bar::before {
    content: "";
    position: absolute;
    z-index: -1;
    inset: 0;
    background: #ff8000;
    clip-path: polygon(0 0, calc(100% - 11px) 0, 100% 50%, calc(100% - 11px) 100%, 0 100%);
}

.bar svg {
    flex: none;
    width: 14px;
    height: 16px;
    margin-left: 3px;
}

.bar.olive::before {
    background: #808040;
}

.late,
.green,
.tan {
    border-left: 5px solid #d3d3d3;
    padding-left: 0;
}

.green {
    border-left-color: #1fc41f;
}

.tan {
    border-left-color: #b08850;
}

.late svg,
.green svg,
.tan svg {
    margin-left: 1px;
}

/* scroll bars */
.scrollbar {
    display: flex;
    flex-direction: column;
    align-items: center;
    width: 16px;
    background: #efefef;
}

.scrollbar .up,
.scrollbar .down {
    width: 0;
    height: 0;
    margin: 6px 0;
    border: 4px solid transparent;
}

.scrollbar .up {
    border-top: 0;
    border-bottom-color: #444;
}

.scrollbar .down {
    margin-top: auto;
    border-bottom: 0;
    border-top-color: #444;
}

.thumb {
    position: relative;
    width: 14px;
    height: 57%;
    border: 1px solid #979797;
    border-radius: 2px;
    background: linear-gradient(90deg, #f4f4f4, #dcdcdc 50%, #c4c4c8);
}

.thumb::after {
    content: "";
    position: absolute;
    left: 3px;
    top: calc(50% - 4px);
    width: 6px;
    height: 8px;
    background: repeating-linear-gradient(#555 0 1px, #eee 1px 3px);
}

/* dialog */
.dialog {
    position: absolute;
    left: 216px;
    right: 215px;
    top: 198px;
    display: flex;
    flex-direction: column;
    padding: 0 2px 3px 3px;
    border: 1px solid #000;
    border-radius: 6px 6px 0 0;
    background: linear-gradient(#9cb8d6, #b9d1ea 24px);
    box-shadow: inset -1px -1px 0 #35c8ee;
}

.dialog-title {
    display: flex;
    align-items: center;
    gap: 3px;
    height: 24px;
    padding: 0 3px 0 2px;
}

.dialog-title span {
    flex: 1;
}

.dialog-icon {
    width: 16px;
    height: 16px;
    background: #b7dfe0;
}

.q,
.x {
    width: 31px;
    height: 17px;
    border: 1px solid #5c7590;
    border-radius: 2px;
    background: linear-gradient(#c8d9ec, #a5bcd6 50%, #c3d8ee);
    font-weight: bold;
}

.x {
    border-color: #5a1d1d;
    background: linear-gradient(#e8a79c, #c1432e 50%, #d0715a);
}

.x svg {
    display: block;
    width: 12px;
    height: 9px;
    margin: 0 auto;
}

.dialog-body {
    background: #fafafa;
}

.intro {
    display: flex;
    justify-content: space-between;
    height: 57px;
    padding: 7px 13px 7px 12px;
    border: 1px solid #a0a0a0;
    background: linear-gradient(#fff, #eee 50%, #fff);
}

.intro h2 {
    font-weight: bold;
}

.intro p {
    margin: 4px 0 0 12px;
    color: #6c6c6c;
    white-space: nowrap;
}

.brand {
    width: 32px;
    height: 28px;
    margin-top: 5px;
}

.search {
    margin: 6px 7px 0 8px;
    border: 1px solid #a0a0a0;
}

.search-title {
    display: flex;
    align-items: center;
    gap: 3px;
    height: 25px;
    padding: 0 2px 0 6px;
    border-bottom: 1px solid #a0a0a0;
    background: linear-gradient(#fafafa, #eee 50%, #fafafa);
}

.search-title h3 {
    flex: 1;
    font-size: 11px;
}

.search-title svg {
    display: block;
    width: 20px;
    height: 20px;
}

.fields {
    display: flex;
    margin: 0 8px;
    border-bottom: 1px solid #a0a0a0;
}

.col {
    display: grid;
    align-items: center;
    align-content: start;
    row-gap: 6px;
    height: 91px;
    padding-top: 7px;
    white-space: nowrap;
}

.col + .col {
    border-left: 1px solid #a0a0a0;
}

.numbers {
    grid-template-columns: 90px 101px;
    width: 206px;
    padding-left: 1px;
}

.names {
    grid-template-columns: 67px 168px;
    width: 265px;
    padding-left: 15px;
}

.dates {
    grid-template-columns: 90px 87px 56px 87px;
    flex: 1;
    padding-left: 17px;
}

.dates span {
    padding-right: 4px;
    text-align: center;
}

.dates .dim {
    color: #a0a0a0;
}

.dates .off {
    color: #666;
}

.pair {
    display: grid;
    grid-template-columns: 74px 88px;
    gap: 6px;
}

input[type="text"],
.date {
    width: 100%;
    height: 21px;
    border: 1px solid #dbdfe6;
    border-top-color: #abadb3;
    border-radius: 2px;
    background-color: #fff;
}

input:disabled {
    background-color: #efefef;
    border-color: #afafaf;
}

.date,
.combo {
    appearance: none;
    padding-left: 1px;
    color: #000;
    background-image: url("data:image/svg+xml,%3Csvg xmlns='http://www.w3.org/2000/svg' width='8' height='4'%3E%3Cpath d='M0 0h8L4 4z'/%3E%3C/svg%3E");
    background-repeat: no-repeat;
    background-position: right 4px center;
}

.date:disabled {
    border-color: #afafaf;
    color: #6d6d6d;
    opacity: 1;
    background-image: url("data:image/svg+xml,%3Csvg xmlns='http://www.w3.org/2000/svg' width='8' height='4'%3E%3Cpath d='M0 0h8L4 4z' fill='%23999'/%3E%3C/svg%3E");
}

.combo {
    height: 20px;
    padding-left: 5px;
    border: 1px solid #707070;
    border-radius: 2px;
    background-color: #dedede;
    background-image: url("data:image/svg+xml,%3Csvg xmlns='http://www.w3.org/2000/svg' width='8' height='4'%3E%3Cpath d='M0 0h8L4 4z'/%3E%3C/svg%3E"), linear-gradient(#f2f2f2, #ebebeb 50%, #dadada 50%, #cfcfcf);
    background-position: right 4px center, 0 0;
}

input[type="checkbox"],
input[type="radio"] {
    appearance: none;
    width: 13px;
    height: 13px;
    margin-right: 5px;
    vertical-align: -2px;
    border: 1px solid #8e8f8f;
    background: linear-gradient(135deg, #c3c7cd, #f4f4f4) padding-box;
    box-shadow: inset 0 0 0 2px #f4f4f4;
}

input[type="checkbox"]:disabled {
    background: #fafafa;
    border-color: #b1b1b1;
}

input[type="checkbox"]:checked {
    background: url("data:image/svg+xml,%3Csvg xmlns='http://www.w3.org/2000/svg' viewBox='0 0 11 11'%3E%3Cpath d='M2 5l3 4 4-7' fill='none' stroke='%234b5e9c' stroke-width='2'/%3E%3C/svg%3E") #e4e7ea;
    box-shadow: none;
}

input[type="checkbox"].some {
    background: linear-gradient(135deg, #45b9dd, #14638d);
}

input[type="radio"] {
    width: 12px;
    height: 12px;
    margin-right: 6px;
    border-radius: 50%;
}

input[type="radio"]:checked {
    background: radial-gradient(circle, #2e9bc9 0 2px, #134263 4px);
}

.status {
    display: grid;
    grid-template-columns: 109fr 120fr 116fr 109fr 102fr 123fr 135fr;
    padding: 8px 0 7px 10px;
    white-space: nowrap;
}

/* reservation grid */
.results {
    display: flex;
    height: 283px;
    margin: 5px 7px 0 8px;
    padding: 1px;
    border: 1px solid #828790;
    background: #fff;
}

.res-table {
    flex: 1;
    table-layout: fixed;
    width: 100%;
    border-collapse: separate;
    border-spacing: 0;
}

.r-check {
    width: 23px;
}

.r-std {
    width: 85px;
}

.r-name {
    width: 168px;
}

.r-source {
    width: 103px;
}

.res-table th {
    height: 24px;
    padding-left: 5px;
    text-align: left;
    font-weight: normal;
    border: solid #e2e2e2;
    border-width: 0 1px 1px 0;
    background: linear-gradient(#fff 50%, #f5f5f5 50%);
}

.res-table td {
    height: 17px;
    padding-left: 5px;
    line-height: 15px;
    white-space: nowrap;
    border: solid #f0f0f0;
    border-width: 0 1px 1px 0;
}

.res-table input {
    display: block;
    margin: 0;
}

.res-table .selected td {
    color: #fff;
    background: #3399ff;
}

.res-table .selected td:first-child {
    background: linear-gradient(90deg, #fff 19px, #3399ff 19px);
}

.results .scrollbar {
    margin-left: 2px;
}

.results .thumb {
    height: 66px;
}

/* dialog buttons */
.actions {
    display: flex;
    gap: 6px;
    margin-top: 6px;
    padding: 11px 7px 12px 8px;
    border-top: 1px solid #a0a0a0;
}

.actions button {
    width: 90px;
    height: 30px;
    border: 1px solid #8a8a8a;
    background: linear-gradient(#e2e2e2, #c6c6c6 48%, #b9b9b9 50%, #d0d0d0);
    font-weight: bold;
}

.split {
    display: flex;
    margin-right: auto;
}

.split button:first-child {
    width: 76px;
}

.actions .split button + button {
    display: grid;
    place-items: center;
    width: 20px;
    margin-left: -1px;
}

.split .caret {
    border: 4px solid transparent;
    border-top-color: #000;
    border-bottom: 0;
}

/* context menu */
.menu {
    position: absolute;
    left: 628px;
    top: 476px;
    width: 192px;
    padding: 1px;
    list-style: none;
    border: 1px solid #979797;
    background: linear-gradient(90deg, #f1f1f1 24px, #fdfdfd 24px);
    box-shadow: 2px 2px 3px rgba(0, 0, 0, .5);
}

.menu li {
    display: grid;
    grid-template-columns: 16px 1fr auto;
    gap: 15px;
    align-items: center;
    height: 22px;
    padding: 1px 30px 0 3px;
}

.menu svg {
    width: 16px;
    height: 16px;
}

.menu span {
    white-space: nowrap;
}

.menu kbd {
    font: inherit;
}

.menu .sep {
    height: 6px;
    padding: 0;
    margin-left: 32px;
    background: linear-gradient(#bdbdbd, #bdbdbd) 0 3px / 100% 1px no-repeat;
}

.menu .hover {
    border: 1px solid #3399ff;
    background: #c4e1ff;
    padding: 0 29px 0 2px;
}

.menu .off {
    color: #808080;
}

/* red frames and green arrows */
.mark {
    position: absolute;
    border: 2px solid #e81414;
    border-radius: 5px;
    box-shadow: 1px 2px 4px rgba(0, 0, 0, .4), inset 1px 2px 4px rgba(0, 0, 0, .25);
    pointer-events: none;
}

.mark-tab {
    left: 39px;
    top: 22px;
    width: 101px;
    height: 36px;
}

.mark-list {
    left: 120px;
    top: 57px;
    width: 54px;
    height: 61px;
}

.mark-menu {
    left: 619px;
    top: 591px;
    width: 205px;
    height: 38px;
}

.pointer {
    position: absolute;
    fill: #92d63c;
    overflow: visible;
    filter: drop-shadow(3px 3px 3px rgba(0, 0, 0, .5));
    pointer-events: none;
}

.to-dialog {
    left: 174px;
    top: 131px;
    width: 112px;
    height: 68px;
}

.to-menu {
    left: 512px;
    top: 482px;
    width: 106px;
    height: 98px;
}
```
